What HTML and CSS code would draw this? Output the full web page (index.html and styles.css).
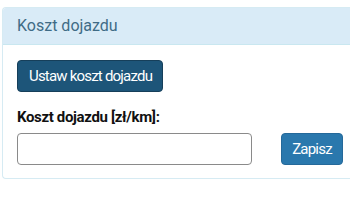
FILE: index.html
```html
<!DOCTYPE html>
<html lang="pl">

<head>
  <meta charset="UTF-8">
  <meta name="viewport" content="width=device-width, initial-scale=1.0">
  <title>Koszt dojazdu</title>
  <link rel="stylesheet" href="styles.css">
</head>

<body>

  <div class="panel">
    <div class="panel-heading">Koszt dojazdu</div>

    <div class="panel-body">
      <button class="btn btn-dark">Ustaw koszt dojazdu</button>

      <label for="koszt" class="label">Koszt dojazdu [zł/km]:</label>
      <div class="form-row">
        <input type="text" id="koszt" class="input">
        <button class="btn btn-primary">Zapisz</button>
      </div>
    </div>
  </div>

</body>

</html>
```

FILE: styles.css
```css
body {
  font-family: Roboto, "Liberation Sans", Arial, sans-serif;
  margin: 0;
  padding: 7px 0 0 2px;
  background-color: #ffffff;
  color: #333333;
}

/* el panel sigue fuera del borde derecho */
.panel {
  border: 1px solid #d6ebf3;
  border-right: none;
  border-radius: 4px 0 0 4px;
}

.panel-heading {
  background-color: #d9ebf7;
  border-bottom: 1px solid #c9e7f0;
  color: #3f6b86;
  font-size: 16px;
  line-height: 20px;
  padding: 8px 14px;
  border-radius: 3px 0 0 0;
}

.panel-body {
  padding: 15px 0 13px 14px;
}

.btn {
  font-family: Roboto, "Liberation Sans", Arial, sans-serif;
  font-size: 15px;
  letter-spacing: -0.8px;
  color: #ffffff;
  border: 1px solid transparent;
  border-radius: 4px;
  height: 32px;
  padding: 0 11px;
  white-space: nowrap;
  cursor: pointer;
}

.btn-dark {
  display: block;
  width: 146px;
  background-color: #1d5579;
  border-color: #163f5a;
  margin-bottom: 16px;
}

.btn-primary {
  width: 62px;
  padding: 0;
  background-color: #2a78ad;
  border-color: #25699a;
}

.label {
  display: block;
  font-weight: bold;
  font-size: 15px;
  letter-spacing: -0.35px;
  line-height: 18px;
  color: #111111;
  margin-bottom: 7px;
}

.form-row {
  display: flex;
  align-items: center;
  gap: 29px;
}

.input {
  flex-shrink: 0;
  width: 235px;
  height: 32px;
  box-sizing: border-box;
  border: 1px solid #8a8a8a;
  border-radius: 4px;
  padding: 4px 8px;
  font-size: 14px;
}
```
